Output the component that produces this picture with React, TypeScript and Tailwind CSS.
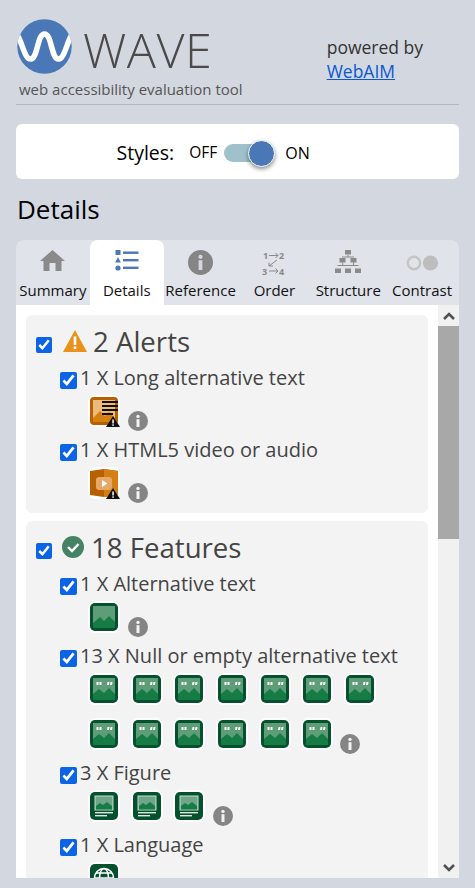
const sans = "font-['Open_Sans',sans-serif]";

function Logo() {
  return (
    <svg width="55" height="55" viewBox="0 0 55 55" className="shrink-0">
      <defs>
        <clipPath id="logo-clip">
          <circle cx="27.5" cy="27.5" r="27.2" />
        </clipPath>
      </defs>
      <circle cx="27.5" cy="27.5" r="27.2" fill="#4a78b6" />
      <g clipPath="url(#logo-clip)">
        <path
          d="M-4 13 C 4 13 6 40 13.5 40 C 21 40 20 15 27.5 15 C 35 15 34 40 41.5 40 C 49 40 51 13 59 13"
          fill="none"
          stroke="#fff"
          strokeWidth="5.5"
        />
      </g>
    </svg>
  );
}

function HomeIcon() {
  return (
    <svg width="25" height="21" viewBox="0 0 25 21">
      <path d="M12.5 0 L25 11 L21.5 11 L21.5 21 L15.5 21 L15.5 13 L9.5 13 L9.5 21 L3.5 21 L3.5 11 L0 11 Z" fill="#8a8a8a" />
    </svg>
  );
}

function ListIcon() {
  return (
    <svg width="24" height="21" viewBox="0 0 24 21" fill="#4a78b6">
      <rect x="0.5" y="0" width="5" height="5" />
      <path d="M3 7 L5.8 12.5 L0.2 12.5 Z" />
      <circle cx="3" cy="18" r="2.6" />
      <rect x="8" y="1.5" width="15.5" height="2.4" />
      <rect x="8" y="9" width="15.5" height="2.4" />
      <rect x="8" y="16.6" width="15.5" height="2.4" />
    </svg>
  );
}

function InfoIcon({ size = 25, glyph = "#f3f3f3" }: { size?: number; glyph?: string }) {
  return (
    <svg width={size} height={size} viewBox="0 0 20 20" className="shrink-0">
      <circle cx="10" cy="10" r="10" fill="#858585" />
      <circle cx="10" cy="5.4" r="1.7" fill={glyph} />
      <rect x="8.5" y="8.2" width="3" height="7.8" fill={glyph} />
    </svg>
  );
}

function OrderIcon() {
  return (
    <svg width="24" height="29" viewBox="0 0 24 29" stroke="#8a8a8a" fill="none">
      <text x="1" y="9" fontSize="9" fontWeight="700" fill="#8a8a8a" stroke="none" fontFamily="Open Sans">1</text>
      <text x="17" y="9" fontSize="9" fontWeight="700" fill="#8a8a8a" stroke="none" fontFamily="Open Sans">2</text>
      <text x="0" y="24.5" fontSize="9" fontWeight="700" fill="#8a8a8a" stroke="none" fontFamily="Open Sans">3</text>
      <text x="17" y="24.5" fontSize="9" fontWeight="700" fill="#8a8a8a" stroke="none" fontFamily="Open Sans">4</text>
      <path d="M7 5.5 H16 M13.5 3 L16 5.5 L13.5 8" />
      <path d="M15 10 L7 16 M7 12.5 V16 H11" />
      <path d="M7 21 H16 M13.5 18.5 L16 21 L13.5 23.5" />
    </svg>
  );
}

function StructureIcon() {
  return (
    <svg width="26" height="23" viewBox="0 0 26 23" fill="#8a8a8a">
      <rect x="10" y="0" width="6" height="4.5" />
      <rect x="12.6" y="4.5" width="0.9" height="3" />
      <rect x="7" y="6.5" width="12" height="1" />
      <rect x="4.5" y="8" width="6" height="4.5" />
      <rect x="15.5" y="8" width="6" height="4.5" />
      <rect x="7.2" y="12.5" width="1" height="3" />
      <rect x="18" y="12.5" width="1" height="3" />
      <rect x="2.5" y="15" width="21" height="1" />
      <rect x="0" y="18.5" width="6" height="4.5" />
      <rect x="10" y="18.5" width="6" height="4.5" />
      <rect x="20" y="18.5" width="6" height="4.5" />
    </svg>
  );
}

function ContrastIcon() {
  return (
    <svg width="33" height="16" viewBox="0 0 33 16" className="mt-[5px]">
      <circle cx="8" cy="8" r="6.2" fill="none" stroke="#c4c4c4" strokeWidth="2.4" />
      <circle cx="24.5" cy="8" r="7.6" fill="#bdbdbd" />
    </svg>
  );
}

function Warning() {
  return (
    <svg width="14" height="11" viewBox="0 0 14 11" className="absolute right-0 bottom-0">
      <path d="M7 0 L14 11 L0 11 Z" fill="#111" />
      <rect x="6.3" y="3.5" width="1.5" height="4" fill="#fff" />
      <rect x="6.3" y="8.3" width="1.5" height="1.5" fill="#fff" />
    </svg>
  );
}

function IconTile({ children, className = "" }: { children: React.ReactNode; className?: string }) {
  return (
    <div className={`relative w-[32px] h-[32px] bg-white rounded-[7px] flex items-center justify-center shrink-0 ${className}`}>
      {children}
    </div>
  );
}

function LongAltIcon() {
  return (
    <IconTile>
      <svg width="28" height="28" viewBox="0 0 28 28">
        <rect x="0" y="0" width="28" height="28" rx="4" fill="#b85f00" />
        <rect x="3" y="3" width="22" height="22" fill="#eeb97d" />
        <path d="M3 25 L3 21 L10 14 L15 19 L19 15 L25 21 L25 25 Z" fill="#d5800f" />
        <g fill="#111">
          <rect x="12" y="4" width="17" height="2" />
          <rect x="12" y="8" width="17" height="2" />
          <rect x="12" y="12" width="17" height="2" />
          <rect x="12" y="16" width="11" height="2" />
        </g>
      </svg>
      <Warning />
    </IconTile>
  );
}

function VideoIcon() {
  return (
    <IconTile className="rounded-[2px]">
      <svg width="28" height="28" viewBox="0 0 28 28">
        <path d="M0 2 L14 0 L28 2 L28 26 L14 28 L0 26 Z" fill="#b85f00" />
        <path d="M14 0 L28 2 L28 26 L14 28 Z" fill="#d57f12" />
        <rect x="6" y="8" width="16" height="13" rx="3" fill="#e5a866" />
        <path d="M12 11 L17.5 14.5 L12 18 Z" fill="#fff" />
      </svg>
      <Warning />
    </IconTile>
  );
}

function AltIcon() {
  return (
    <IconTile>
      <svg width="28" height="28" viewBox="0 0 28 28">
        <rect width="28" height="28" rx="5" fill="#05512e" />
        <rect x="3" y="3" width="22" height="22" fill="#5d9d78" />
        <path d="M3 25 V20 L10 14 L14 18 L19 13 L25 19 V25 Z" fill="#167c46" />
      </svg>
    </IconTile>
  );
}

function NullAltIcon() {
  return (
    <IconTile>
      <svg width="28" height="28" viewBox="0 0 28 28">
        <rect width="28" height="28" rx="5" fill="#05512e" />
        <rect x="3" y="3" width="22" height="22" fill="#5d9d78" />
        <path d="M3 25 V19 L9 14 L14 18 L19 13 L25 19 V25 Z" fill="#167c46" />
        <path d="M6.5 7 H8.5 V10 H6.5 Z M9.5 7 H11.5 V10 H9.5 Z M17.5 7 H19.5 L19 10 H17 Z M20.5 7 H22.5 L22 10 H20 Z" fill="#fff" />
      </svg>
    </IconTile>
  );
}

function FigureIcon() {
  return (
    <IconTile>
      <svg width="28" height="28" viewBox="0 0 28 28">
        <rect width="28" height="28" rx="5" fill="#05512e" />
        <rect x="5" y="4" width="18" height="14" fill="#6fa68a" stroke="#c3dacd" strokeWidth="1" />
        <path d="M6 17.5 V14 L10 11 L13 13 L17 10 L22 14 V17.5 Z" fill="#167c46" />
        <rect x="5" y="20" width="18" height="1.4" fill="#dcebe2" />
        <rect x="5" y="23" width="12" height="1.4" fill="#dcebe2" />
      </svg>
    </IconTile>
  );
}

function LanguageIcon() {
  return (
    <IconTile>
      <svg width="28" height="28" viewBox="0 0 28 28">
        <rect width="28" height="28" rx="5" fill="#05512e" />
        <g fill="none" stroke="#fff" strokeWidth="1.6">
          <circle cx="14" cy="14" r="9.5" />
          <ellipse cx="14" cy="14" rx="4.5" ry="9.5" />
          <path d="M4.5 14 H23.5 M6 9 H22 M6 19 H22" />
        </g>
      </svg>
    </IconTile>
  );
}

function Check({ className }: { className: string }) {
  return <input type="checkbox" checked readOnly className={`accent-[#0b63e5] m-0 shrink-0 ${className}`} />;
}

function GroupHead({ icon, label, tight }: { icon: React.ReactNode; label: string; tight?: boolean }) {
  return (
    <div className="flex items-center pl-[10px] h-[38px]">
      <Check className="w-[16px] h-[16px] mt-[6px]" />
      <span className={`${tight ? "ml-[10px] mr-[7px]" : "ml-[11px] mr-[6px]"} -mt-[2px] shrink-0`}>{icon}</span>
      <span className="text-[27.6px] leading-[38px] -mt-[2px] text-[#444]">{label}</span>
    </div>
  );
}

function Item({ label, children, rowClass = "" }: { label: string; children: React.ReactNode; rowClass?: string }) {
  return (
    <div>
      <div className="flex items-center pl-[34px] h-[26px]">
        <Check className="w-[17px] h-[17px] mt-[5px]" />
        <span className="ml-[3px] text-[20px] leading-[26px] text-[#444] whitespace-nowrap">{label}</span>
      </div>
      <div className={`flex flex-wrap items-start pl-[62px] pt-[4px] ${rowClass}`}>{children}</div>
    </div>
  );
}

function RowInfo({ className = "ml-[8px]" }: { className?: string }) {
  return (
    <span className={`mt-[16px] ${className}`}>
      <InfoIcon size={20} />
    </span>
  );
}

const tabs = [
  { label: "Summary", icon: <HomeIcon /> },
  { label: "Details", icon: <ListIcon />, active: true },
  { label: "Reference", icon: <InfoIcon glyph="#d5d7da" /> },
  { label: "Order", icon: <OrderIcon /> },
  { label: "Structure", icon: <StructureIcon /> },
  { label: "Contrast", icon: <ContrastIcon /> },
];

export default function App() {
  return (
    <div className={`${sans} w-[475px] h-[888px] overflow-hidden bg-[#d3d8e0] px-[16px]`}>
      <header className="h-[105px] border-b border-[#b4b8bc] relative">
        <div className="flex pt-[19px] pl-[1px]">
          <Logo />
          <span className="ml-[11px] mt-[2px] h-[56px] text-[48.5px] leading-[56px] font-light text-[#4a4a4a] tracking-[0.5px]">WAVE</span>
          <div className="ml-auto mr-[36px] mt-[16px] text-[17.5px] leading-[24px] text-[#333]">
            <div>powered by</div>
            <a href="#" className="text-[#0b57d0] underline">WebAIM</a>
          </div>
        </div>
        <div className="absolute left-[3px] top-[79px] text-[15px] leading-[20px] text-[#555]">
          web accessibility evaluation tool
        </div>
      </header>

      <div className="mt-[19px] h-[55px] bg-white rounded-[6px] flex items-center pl-[100.5px] pt-[2px]">
        <span className="text-[19.5px] text-black">Styles:</span>
        <span className="ml-[15px] text-[15.5px] text-black">OFF</span>
        <span className="relative ml-[7px] w-[50px] h-[18px] rounded-full bg-[#9fc1cc]">
          <span className="absolute right-[-1px] top-[-4px] w-[27px] h-[27px] rounded-full bg-[#4a78b6] border border-white shadow-[0_2px_4px_rgba(0,0,0,0.45)]" />
        </span>
        <span className="ml-[11px] text-[16px] text-black">ON</span>
      </div>

      <h2 className="mt-[12px] h-[37px] pl-[1px] text-[26px] leading-[36px] text-black">Details</h2>

      <div className="mt-[12px] h-[638px] rounded-t-[8px] bg-[#e0e3e9] overflow-hidden flex flex-col">
        <div className="flex h-[65px] shrink-0">
          {tabs.map((t) => (
            <div
              key={t.label}
              className={`w-[74px] flex flex-col items-center pt-[10px] rounded-t-[8px] ${t.active ? "bg-white" : ""}`}
            >
              <div className="h-[29px] flex items-start">{t.icon}</div>
              <span className="mt-[1px] text-[15px] leading-[20px] whitespace-nowrap text-[#111]">
                {t.label}
              </span>
            </div>
          ))}
        </div>

        <div className="flex-1 min-h-0 bg-white flex overflow-hidden">
          <div className="flex-1 min-w-0 pl-[10px] pr-[10px] pt-[10px] overflow-hidden">
            <section className="h-[198px] bg-[#f3f3f3] rounded-[6px] pt-[8px]">
              <GroupHead
                label="2 Alerts"
                icon={
                  <svg width="24" height="22" viewBox="0 0 24 22" className="block">
                    <path d="M12 0 L24 22 L0 22 Z" fill="#e8921c" />
                    <rect x="10.7" y="6.5" width="2.6" height="8.5" fill="#fff" />
                    <rect x="10.7" y="16.5" width="2.6" height="2.6" fill="#fff" />
                  </svg>
                }
              />
              <div className="mt-[4px] flex flex-col gap-[6px]">
                <Item label="1 X Long alternative text">
                  <LongAltIcon />
                  <RowInfo />
                </Item>
                <Item label="1 X HTML5 video or audio">
                  <VideoIcon />
                  <RowInfo />
                </Item>
              </div>
            </section>

            <section className="mt-[8px] bg-[#f3f3f3] rounded-[6px] pt-[8px] h-[400px]">
              <GroupHead
                label="18 Features"
                tight
                icon={
                  <svg width="22" height="22" viewBox="0 0 22 22" className="block">
                    <circle cx="11" cy="11" r="11" fill="#468264" />
                    <path d="M6 11 L10 15 L16.5 8" fill="none" stroke="#fff" strokeWidth="2.4" />
                  </svg>
                }
              />
              <div className="mt-[4px] flex flex-col gap-[6px]">
                <Item label="1 X Alternative text">
                  <AltIcon />
                  <RowInfo />
                </Item>
                <Item label="13 X Null or empty alternative text" rowClass="gap-y-[9px]">
                  {Array.from({ length: 13 }).map((_, i) => (
                    <div key={i} className="w-[42.7px] h-[36px]">
                      <NullAltIcon />
                    </div>
                  ))}
                  <RowInfo className="-ml-[4px]" />
                </Item>
                <Item label="3 X Figure">
                  {[0, 1, 2].map((i) => (
                    <div key={i} className="w-[42.5px] h-[36px]">
                      <FigureIcon />
                    </div>
                  ))}
                  <RowInfo className="-ml-[3px]" />
                </Item>
                <Item label="1 X Language">
                  <LanguageIcon />
                </Item>
              </div>
            </section>
          </div>

          <div className="w-[21px] shrink-0 bg-[#f1f1f1] flex flex-col">
            <div className="h-[21px] flex items-center justify-center">
              <svg width="14" height="10" viewBox="0 0 14 10">
                <path d="M2 8 L7 3 L12 8" fill="none" stroke="#505050" strokeWidth="2.6" />
              </svg>
            </div>
            <div className="h-[213px] bg-[#a8a8a8]" />
            <div className="flex-1" />
            <div className="h-[21px] flex items-center justify-center">
              <svg width="14" height="10" viewBox="0 0 14 10">
                <path d="M2 2 L7 7 L12 2" fill="none" stroke="#505050" strokeWidth="2.6" />
              </svg>
            </div>
          </div>
        </div>
      </div>
    </div>
  );
}
